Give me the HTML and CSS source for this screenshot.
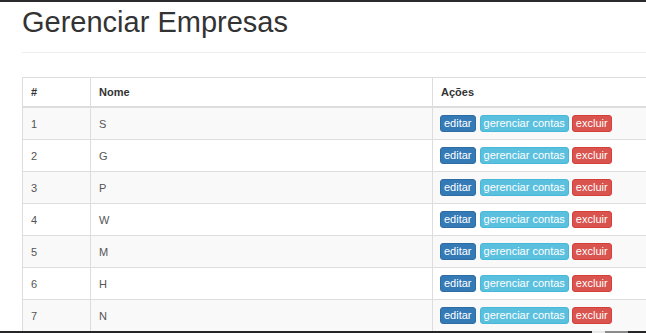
FILE: index.html
```html
<!DOCTYPE html>
<html lang="pt">
<head>
<meta charset="utf-8">
<title>Gerenciar Empresas</title>
<link rel="stylesheet" href="styles.css">
</head>
<body>
<div class="topbar"></div>
<div class="container">
  <div class="page-header">
    <h1>Gerenciar Empresas</h1>
  </div>
  <table class="table">
    <colgroup>
      <col class="col-id">
      <col class="col-name">
      <col class="col-actions">
    </colgroup>
    <thead>
      <tr><th>#</th><th>Nome</th><th>Ações</th></tr>
    </thead>
    <tbody>
      <tr><td>1</td><td>S</td><td><div class="actions"><a class="btn btn-primary">editar</a><a class="btn btn-info">gerenciar contas</a><a class="btn btn-danger">excluir</a></div></td></tr>
      <tr><td>2</td><td>G</td><td><div class="actions"><a class="btn btn-primary">editar</a><a class="btn btn-info">gerenciar contas</a><a class="btn btn-danger">excluir</a></div></td></tr>
      <tr><td>3</td><td>P</td><td><div class="actions"><a class="btn btn-primary">editar</a><a class="btn btn-info">gerenciar contas</a><a class="btn btn-danger">excluir</a></div></td></tr>
      <tr><td>4</td><td>W</td><td><div class="actions"><a class="btn btn-primary">editar</a><a class="btn btn-info">gerenciar contas</a><a class="btn btn-danger">excluir</a></div></td></tr>
      <tr><td>5</td><td>M</td><td><div class="actions"><a class="btn btn-primary">editar</a><a class="btn btn-info">gerenciar contas</a><a class="btn btn-danger">excluir</a></div></td></tr>
      <tr><td>6</td><td>H</td><td><div class="actions"><a class="btn btn-primary">editar</a><a class="btn btn-info">gerenciar contas</a><a class="btn btn-danger">excluir</a></div></td></tr>
      <tr><td>7</td><td>N</td><td><div class="actions"><a class="btn btn-primary">editar</a><a class="btn btn-info">gerenciar contas</a><a class="btn btn-danger">excluir</a></div></td></tr>
    </tbody>
  </table>
</div>
<div class="bottombar"><span class="seg-light"></span><span class="seg-gray"></span></div>
</body>
</html>
```

FILE: styles.css
```css
html, body {
  margin: 0;
  padding: 0;
  overflow: hidden;
  background: #fff;
  font-family: "Liberation Sans", Arial, Helvetica, sans-serif;
  color: #333;
}

.topbar {
  height: 2px;
  background: #2b2b2e;
}

.container {
  padding-left: 22px;
}

.page-header {
  padding-bottom: 14px;
  border-bottom: 1px solid #eeeeee;
  margin-bottom: 24px;
}

.page-header h1 {
  margin: 4px 0 0 0;
  font-size: 29px;
  line-height: 32px;
  font-weight: normal;
  color: #333;
}

.table {
  border-collapse: collapse;
  table-layout: fixed;
  width: 100%;
  border: 1px solid #dddddd;
  border-right: none;
  font-size: 11px;
}

.col-id { width: 68px; }
.col-name { width: 342px; }

.table th,
.table td {
  border-left: 1px solid #dddddd;
  padding: 0 8px;
  text-align: left;
  vertical-align: middle;
}

.table th {
  height: 28px;
  font-weight: bold;
  color: #333;
  border-bottom: 2px solid #dddddd;
}

.table td {
  height: 31px;
  color: #555555;
  border-top: 1px solid #dddddd;
}

.table tbody tr:nth-child(odd) td {
  background: #f9f9f9;
}

.actions {
  display: flex;
  gap: 3px;
  margin-left: -1px;
}

.btn {
  display: inline-block;
  padding: 0 3px;
  font-size: 11px;
  line-height: 15px;
  border: 1px solid transparent;
  border-radius: 3px;
  color: #fff;
  white-space: nowrap;
}

.btn-primary { background: #337ab7; border-color: #2e6da4; }
.btn-info { background: #5bc0de; border-color: #46b8da; margin-left: 1px; }
.btn-danger { background: #d9534f; border-color: #d43f3a; }

.bottombar {
  position: absolute;
  left: 0;
  right: 0;
  bottom: 0;
  height: 2px;
  background: #262628;
}

.seg-light {
  position: absolute;
  left: 592px;
  width: 13px;
  top: 0;
  bottom: 0;
  background: #e8e8e8;
}

.seg-gray {
  position: absolute;
  left: 605px;
  width: 23px;
  top: 0;
  bottom: 0;
  background: #8a8a8a;
}
```
